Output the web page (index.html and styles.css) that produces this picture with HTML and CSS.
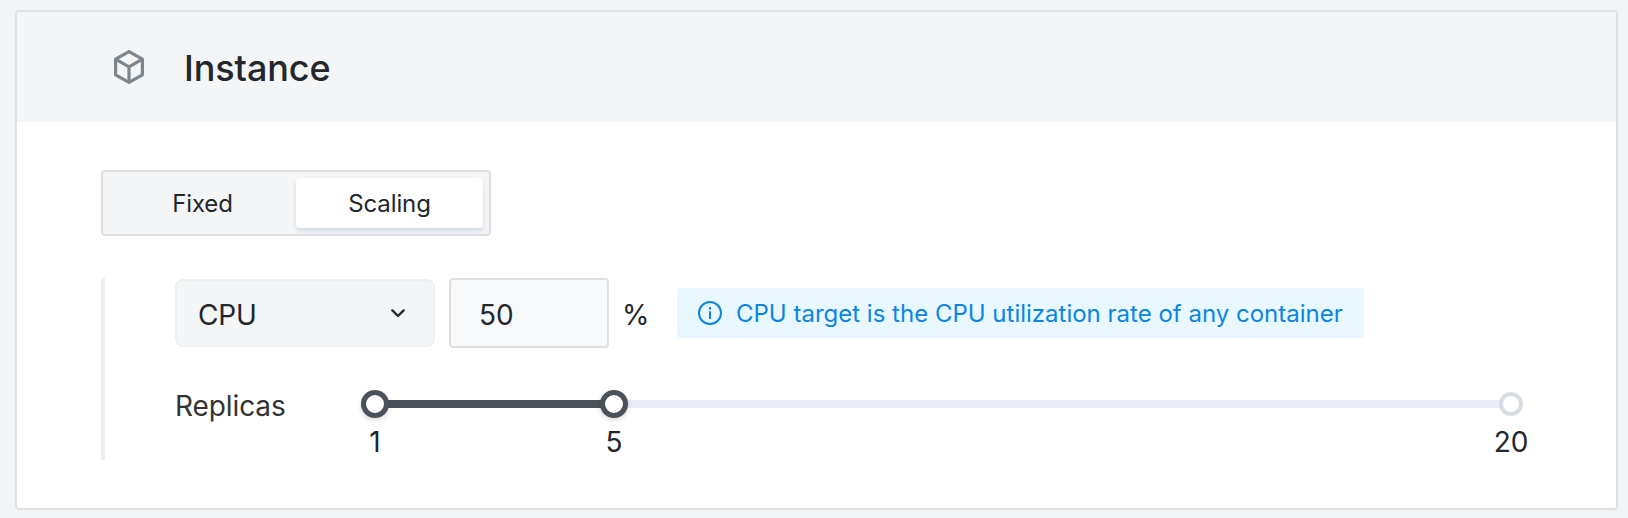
FILE: index.html
```html
<!DOCTYPE html>
<html lang="en">
<head>
<meta charset="utf-8">
<title>Instance</title>
<link rel="stylesheet" href="styles.css">
</head>
<body>
<section class="card">
  <header class="card-header">
    <svg class="cube" viewBox="0 0 30 34" fill="none" stroke="#7d868c" stroke-width="3.2" stroke-linejoin="round">
      <path d="M15 1.7 28.4 9.2V24.8L15 32.3 1.6 24.8V9.2Z"/>
      <path d="M1.6 9.2 15 16.8 28.4 9.2M15 16.8V32.3"/>
    </svg>
    <h1 class="title">Instance</h1>
  </header>
  <div class="card-body">
    <div class="toggle">
      <div class="toggle-item">Fixed</div>
      <div class="toggle-item active">Scaling</div>
    </div>
    <div class="settings">
      <div class="target-row">
        <div class="select">
          <span>CPU</span>
          <svg class="chevron" viewBox="0 0 14 9" fill="none" stroke="#25292d" stroke-width="2.4" stroke-linecap="round" stroke-linejoin="round"><path d="M1.4 1.4 7 7 12.6 1.4"/></svg>
        </div>
        <div class="input">50</div>
        <span class="percent">%</span>
        <div class="info">
          <svg class="info-icon" viewBox="0 0 24 24" fill="none" stroke="#0b86e0" stroke-width="2"><circle cx="12" cy="12" r="11"/><path d="M12 10.3V18M12 6V8.4"/></svg>
          <span class="info-text">CPU target is the CPU utilization rate of any container</span>
        </div>
      </div>
      <div class="replicas-row">
        <span class="replicas-label">Replicas</span>
        <div class="slider">
          <div class="track"><div class="fill"></div></div>
          <div class="stop handle at-min"><span class="stop-label">1</span></div>
          <div class="stop handle at-value"><span class="stop-label">5</span></div>
          <div class="stop limit"><span class="stop-label">20</span></div>
        </div>
      </div>
    </div>
  </div>
</section>
</body>
</html>
```
FILE: styles.css
```css
* {
  box-sizing: border-box;
}

body {
  margin: 0;
  height: 518px;
  padding: 10px 10px 8px 15px;
  background: #f2f3f5;
  color: #23272b;
  font-family: Inter, "Liberation Sans", sans-serif;
  font-size: 28px;
  line-height: 34px;
}

svg {
  display: block;
  flex: none;
}

.card {
  height: 500px;
  border: 2px solid #dfe1e3;
  border-radius: 4px;
  background: #fff;
  overflow: hidden;
}

.card-header {
  display: flex;
  align-items: center;
  height: 110px;
  padding-left: 97px;
  background: #f4f5f7;
}

.cube {
  width: 30px;
  height: 34px;
}

.title {
  margin: 1px 0 0 40px;
  font-size: 36px;
  line-height: 44px;
  font-weight: 500;
  letter-spacing: -0.1px;
}

.card-body {
  padding: 48px 92px 0 84px;
}

.toggle {
  display: flex;
  width: 390px;
  height: 66px;
  padding: 6px;
  border: 2px solid #dddfe1;
  border-radius: 4px;
  background: #f4f5f7;
  font-size: 24px;
  letter-spacing: -0.1px;
}

.toggle-item {
  display: flex;
  flex: 1;
  align-items: center;
  justify-content: center;
  height: 50px;
  padding-top: 2px;
  border-radius: 4px;
}

.toggle-item.active {
  background: #fff;
  box-shadow: 0 3px 4px #d5dae5;
}

.settings {
  height: 182px;
  margin-top: 42px;
  padding-left: 70px;
  border-left: 4px solid #eeeff2;
}

.target-row {
  display: flex;
  align-items: center;
  height: 70px;
}

.select {
  display: flex;
  align-items: center;
  justify-content: space-between;
  width: 260px;
  height: 68px;
  padding: 3px 28px 0 21px;
  border: 2px solid #eeeff0;
  border-radius: 8px;
  background: #f4f5f7;
  letter-spacing: -0.2px;
}

.chevron {
  width: 14px;
  height: 9px;
  margin-top: -3px;
}

.input {
  width: 160px;
  height: 70px;
  margin-left: 14px;
  padding: 18px 0 0 28px;
  border: 2px solid #dddfe1;
  border-radius: 4px;
  background: #f7f8fa;
}

.percent {
  width: 28px;
  margin: 3px 27px 0 13px;
}

.info {
  display: flex;
  align-items: center;
  width: 687px;
  height: 50px;
  padding-left: 21px;
  border-radius: 4px;
  background: #e9f7ff;
  color: #0b86e0;
  font-size: 24px;
}

.info-icon {
  width: 24px;
  height: 24px;
}

.info-text {
  margin: 2px 0 0 14px;
  white-space: nowrap;
}

.replicas-row {
  display: flex;
  align-items: center;
  height: 34px;
  margin-top: 39px;
}

.replicas-label {
  width: 186px;
  margin-top: 3px;
  color: #333;
  letter-spacing: -0.1px;
}

.slider {
  position: relative;
  width: 1136px;
  height: 8px;
  margin: 0 0 0 14px;
}

.track {
  height: 8px;
  background: #e9ecf4;
}

.fill {
  width: 21.05%;
  height: 100%;
  background: #4a5158;
}

.stop {
  position: absolute;
  top: 4px;
  display: flex;
  justify-content: center;
  border-radius: 50%;
  background: #fff;
  transform: translate(-50%, -50%);
}

.handle {
  width: 28px;
  height: 28px;
  border: 5px solid #4a5158;
  box-shadow: 0 2px 5px rgba(0, 0, 0, 0.16);
}

.limit {
  left: 100%;
  width: 24px;
  height: 24px;
  border: 4px solid #d7dce3;
}

.at-min {
  left: 0;
}

.at-value {
  left: 21.05%;
}

.stop-label {
  position: absolute;
  top: 30px;
}

.limit .stop-label {
  top: 29px;
}
```
